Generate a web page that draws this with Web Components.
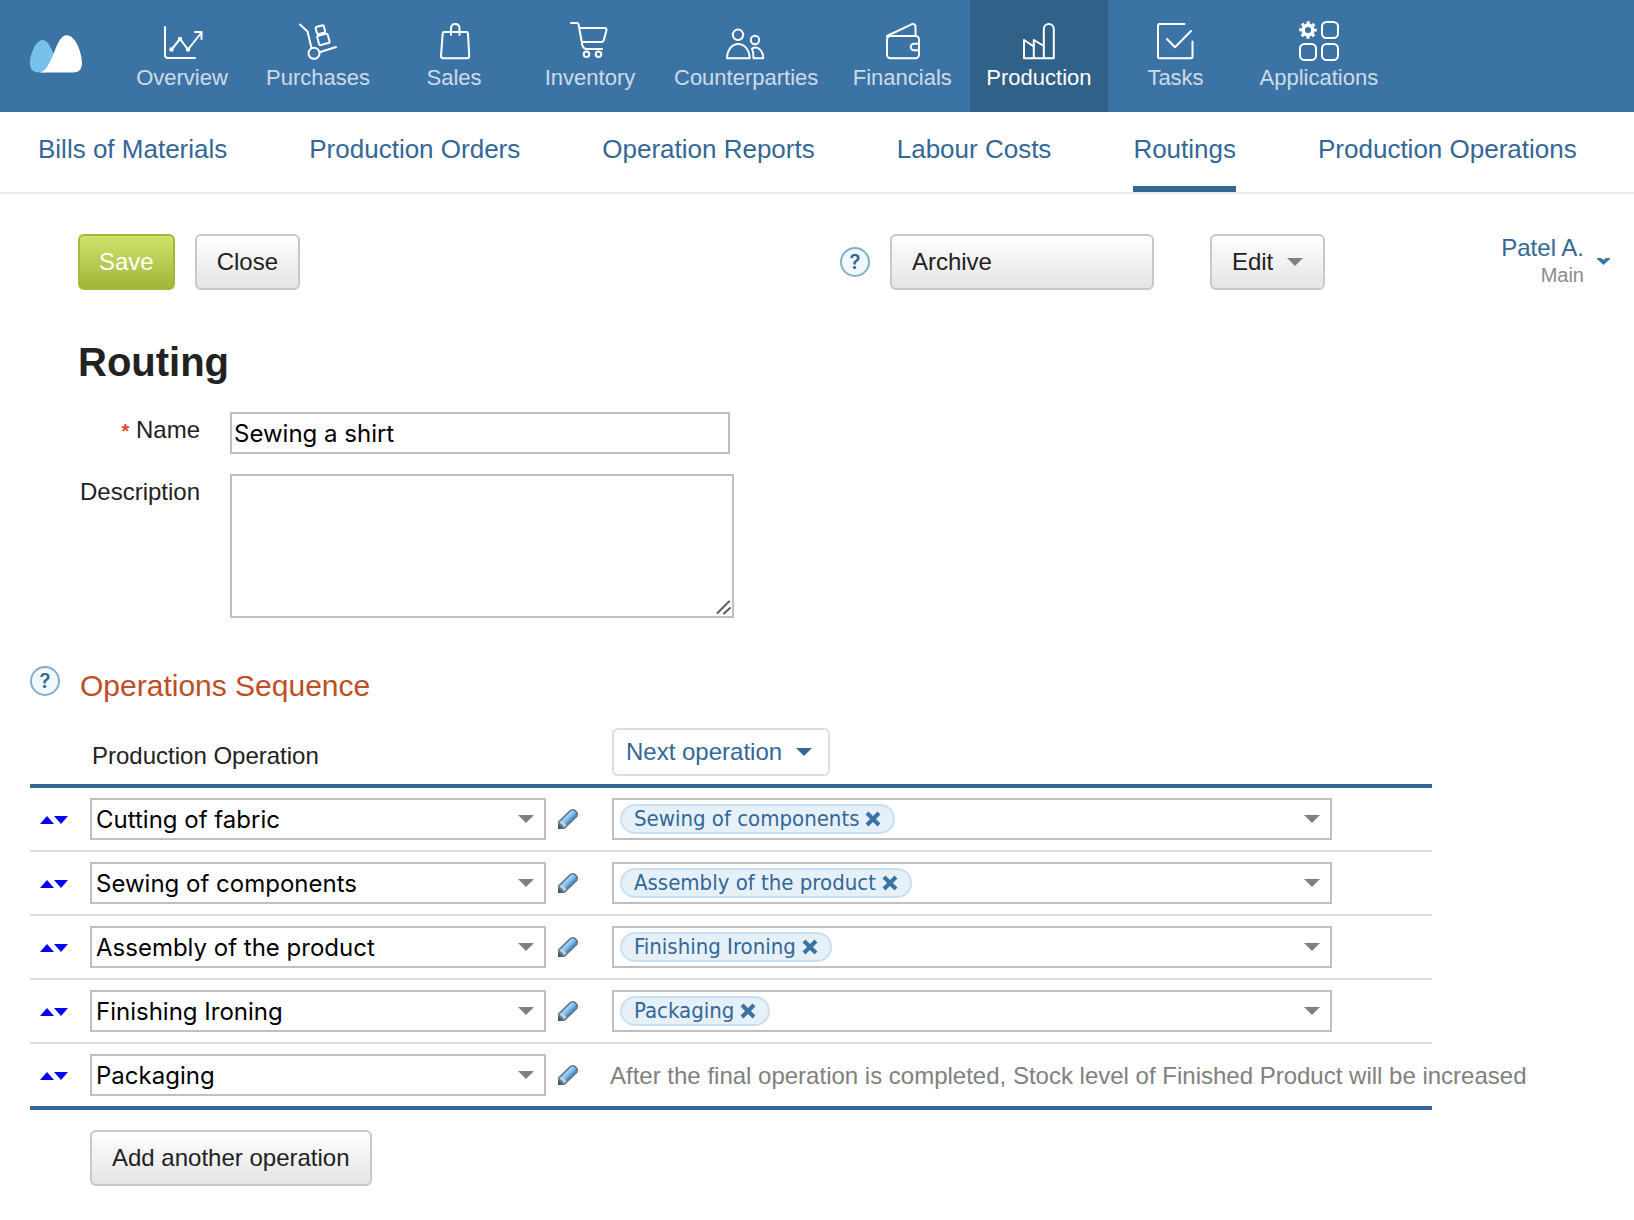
<!DOCTYPE html>
<html lang="en">
<head>
<meta charset="utf-8">
<title>Routing</title>
<style>
  body {
    margin: 0;
    background: #ffffff;
    color: #222222;
    font-family: "Liberation Sans", Arial, sans-serif;
    font-size: 24px;
    line-height: 32px;
    --nav: #3c73a5;
    --nav-active: #306189;
    --link: #326797;
    --muted: #808080;
    --field-border: #bfbfbf;
    --field-font: Inter, sans-serif;
    --tag-font: "DejaVu Sans Condensed", "DejaVu Sans", sans-serif;
  }
</style>
</head>
<body>
<routing-page></routing-page>

<script>
// Registers an element whose shadow root is cloned from the given markup.
function define(name, html, setup) {
  const template = document.createElement("template");
  template.innerHTML = html;

  customElements.define(name, class extends HTMLElement {
    constructor() {
      super();
      this.attachShadow({ mode: "open" });
      this.shadowRoot.appendChild(template.content.cloneNode(true));
    }

    connectedCallback() {
      if (setup && !this.ready) {
        this.ready = true;
        setup(this, this.shadowRoot);
      }
    }
  });
}

const navIcons = {
  overview: `
    <path d="M3 7V35Q3 38 6 38H33"/>
    <path d="M9.500 29.500L18 19L26 29.500L39.500 12.500"/>
    <path d="M33 12H39.500V19"/>
    <g fill="currentColor" stroke="none"><circle cx="9.500" cy="29.500" r="2.200"/><circle cx="18" cy="19" r="2.200"/><circle cx="26" cy="29.500" r="2.200"/></g>`,
  purchases: `
    <path d="M2 4.500L9.500 11.500L13.500 28"/>
    <circle cx="16" cy="33.300" r="5.500"/>
    <path d="M21.500 32.300L38 27"/>
    <rect x="18.200" y="6" width="8.400" height="7.500" rx="1.500" transform="rotate(-15 22.400 9.700)"/>
    <rect x="20" y="14.600" width="10.800" height="9.600" rx="1.500" transform="rotate(-15 25.400 19.400)"/>`,
  sales: `
    <path d="M10.500 12H32.500Q33.800 12 34 13.500L35.200 36Q35.200 38.200 33 38.200H9.200Q7 38.200 7 36L8.700 13.500Q8.900 12 10.500 12Z"/>
    <path d="M17 15V8.500Q17 4 21.300 4Q25.500 4 25.500 8.500V15"/>`,
  inventory: `
    <path d="M1 3H7Q8.300 3 8.600 4.500L12.300 25Q13.200 29 17 29H32"/>
    <path d="M9.500 8H34.500Q37 8 36.400 10.500L33.800 20Q33.200 22 31 22H12"/>
    <circle cx="16.500" cy="34.300" r="2.800"/><circle cx="28.500" cy="34.300" r="2.800"/>`,
  counterparties: `
    <circle cx="12" cy="14.800" r="5.200"/>
    <path d="M1 38.200C1.500 19.300 23 19.300 23.700 38.200Z"/>
    <circle cx="29" cy="20" r="4.200"/>
    <path d="M26 28.500C31 25.500 37 29.500 37.300 38.200H27.500C27.500 34 27 31 26 28.500Z"/>`,
  financials: `
    <rect x="5" y="16" width="32" height="22.200" rx="3.500"/>
    <path d="M5 16L29.500 4.300Q33.300 3.200 33.500 7V16"/>
    <path d="M37 23.700H32A3.200 3.200 0 0 0 32 30.200H37"/>`,
  production: `
    <path d="M5 38.200V20L14.800 26.500V20L24.800 26V9A5 5 0 0 1 34.800 9V38.200Z"/>
    <path d="M14.800 26V38M24.800 26V38"/>`,
  tasks: `
    <path d="M28.500 4H3.500Q2 4 2 5.500V36.700Q2 38.200 3.500 38.200H35Q36.500 38.200 36.500 36.700V21.500"/>
    <path d="M11 19L19 27.300L35 11"/>`,
  applications: `
    <rect x="23" y="2" width="16" height="16" rx="4.500"/>
    <rect x="1" y="24" width="16" height="16" rx="4.500"/>
    <rect x="23" y="24" width="16" height="16" rx="4.500"/>
    <circle cx="9" cy="10" r="4.900" stroke-width="3.600"/>
    <circle cx="9" cy="10" r="7.400" stroke-width="2.800" stroke-linecap="butt" stroke-dasharray="3 2.812" stroke-dashoffset="1.500"/>`
};

define("nav-item", `
  <style>
    :host { display: block; }
    a {
      display: flex;
      flex-direction: column;
      align-items: center;
      gap: 5px;
      box-sizing: border-box;
      min-width: 136px;
      height: 112px;
      padding: 20px 16px 0;
      color: #ffffff;
      text-decoration: none;
    }
    :host([active]) a { background: var(--nav-active); }
    svg { display: block; overflow: visible; }
    span { font-size: 22px; line-height: 26px; opacity: 0.74; }
    :host([active]) span { opacity: 1; }
  </style>
  <a href="#">
    <svg width="40" height="40" viewBox="0 0 40 40" fill="none" stroke="currentColor" stroke-width="2" stroke-linejoin="round" stroke-linecap="round" aria-hidden="true"></svg>
    <span><slot></slot></span>
  </a>
`, (host, root) => {
  root.querySelector("svg").innerHTML = navIcons[host.getAttribute("icon")];
});

define("top-nav", `
  <style>
    :host { display: block; background: var(--nav); }
    nav { display: flex; align-items: center; padding-left: 30px; }
    .logo { display: block; margin-right: 32px; padding-bottom: 4px; }
    svg { display: block; }
  </style>
  <nav>
    <a class="logo" href="#" aria-label="Home">
      <svg width="52" height="40" viewBox="30 34 52 40">
        <path fill="#78c1ec" d="M30 63C30 55 35.500 40 42.500 40C48.500 40 51 48.500 53.500 54L46 72.500H39C32.500 72.500 30 69 30 63Z"/>
        <path fill="#ffffff" d="M40 72.500C53 70 55 35.500 66.500 35.300C76 35.300 82 54 82 62.500C82 69.500 79 72.500 72.500 72.500Z"/>
      </svg>
    </a>
    <slot></slot>
  </nav>
`);

define("sub-nav", `
  <style>
    :host { display: block; border-bottom: 2px solid #ebebeb; }
    nav { display: flex; gap: 82px; padding-left: 38px; }
  </style>
  <nav><slot></slot></nav>
`);

define("sub-nav-link", `
  <style>
    :host { display: block; white-space: nowrap; }
    a {
      display: block;
      box-sizing: border-box;
      height: 80px;
      padding-top: 21px;
      border-bottom: 6px solid transparent;
      color: var(--link);
      font-size: 26px;
      text-decoration: none;
    }
    :host([active]) a { border-color: var(--link); }
  </style>
  <a href="#"><slot></slot></a>
`);

define("ui-button", `
  <style>
    :host { display: block; }
    button {
      display: flex;
      align-items: center;
      gap: 14px;
      width: 100%;
      height: 56px;
      padding: 0 20px;
      border: 2px solid #c8c8c8;
      border-radius: 6px;
      background: linear-gradient(#ffffff, #e4e4e4);
      color: #222222;
      font: inherit;
      white-space: nowrap;
    }
    :host([primary]) button {
      padding: 0 19px;
      border-color: #a4b83a;
      background: linear-gradient(#cfe26d, #a3b638);
      color: #ffffff;
    }
    :host([outline]) button {
      height: 48px;
      padding: 0 16px 0 12px;
      border-color: #dddddd;
      background: #ffffff;
      color: var(--link);
    }
    svg { display: none; fill: #808080; }
    :host([menu]) svg { display: block; }
    :host([outline]) svg { fill: var(--link); }
  </style>
  <button type="button">
    <slot></slot>
    <svg width="16" height="8" viewBox="0 0 16 8" aria-hidden="true"><path d="M0 0H16L8 8Z"/></svg>
  </button>
`);

define("help-tip", `
  <style>
    :host { display: block; flex: none; }
    button {
      display: block;
      width: 30px;
      height: 30px;
      padding: 0;
      border: 2px solid #85aecd;
      border-radius: 50%;
      background: #f0f7fd;
      color: var(--link);
      font: 600 20px/26px var(--field-font);
      text-align: center;
    }
  </style>
  <button type="button">?</button>
`);

define("user-menu", `
  <style>
    :host { display: block; }
    button {
      display: flex;
      align-items: center;
      gap: 13px;
      padding: 0 0 2px;
      border: 0;
      background: none;
      font: inherit;
      color: var(--link);
      text-align: right;
    }
    .name, .role { display: block; white-space: nowrap; }
    .name { line-height: 28px; }
    .role { color: #8c8c8c; font-size: 20px; line-height: 26px; }
  </style>
  <button type="button">
    <span>
      <span class="name"><slot></slot></span>
      <span class="role"><slot name="role"></slot></span>
    </span>
    <svg width="13" height="7" viewBox="0 0 13 7" fill="#3c73a5" aria-hidden="true"><path d="M0 0H4L6.500 2L9 0H13V1L6.500 7L0 1Z"/></svg>
  </button>
`);

define("tool-bar", `
  <style>
    :host {
      display: flex;
      align-items: center;
      gap: 20px;
      height: 56px;
      padding: 40px 24px 0 78px;
    }
    help-tip { margin-left: auto; }
    .archive { width: 264px; }
    .edit { margin-left: 36px; }
    user-menu { margin-left: 156px; }
  </style>
  <ui-button primary>Save</ui-button>
  <ui-button>Close</ui-button>
  <help-tip></help-tip>
  <ui-button class="archive">Archive</ui-button>
  <ui-button class="edit" menu>Edit</ui-button>
  <user-menu>Patel A.<span slot="role">Main</span></user-menu>
`);

define("routing-form", `
  <style>
    :host { display: block; padding: 48px 78px 0; }
    h1 { margin: 0 0 26px; font-size: 40px; line-height: 48px; }
    form {
      display: grid;
      grid-template-columns: 122px minmax(0, 504px);
      gap: 20px 30px;
    }
    label { padding-top: 2px; text-align: right; white-space: nowrap; }
    .required { color: #e8402c; font-size: 20px; font-weight: bold; }
    input, textarea {
      display: block;
      box-sizing: border-box;
      margin: 0;
      border: 2px solid var(--field-border);
      border-radius: 0;
      background: #ffffff;
      color: #000000;
      font: 24px/32px var(--field-font);
      outline: 0;
    }
    input { width: calc(100% - 4px); height: 42px; padding: 1px 2px 0; }
    textarea { width: 100%; height: 144px; padding: 4px; resize: none; }
    .area { position: relative; }
    .area svg { position: absolute; right: 3px; bottom: 3px; }
  </style>
  <h1>Routing</h1>
  <form>
    <label for="name"><span class="required">*</span> Name</label>
    <input id="name" type="text" value="Sewing a shirt">
    <label for="description">Description</label>
    <div class="area">
      <textarea id="description"></textarea>
      <svg width="15" height="15" viewBox="0 0 15 15" stroke="#5c5c5c" stroke-width="2" stroke-linecap="round" aria-hidden="true"><path d="M1.500 13L13 1.500M8 13.500L14 8"/></svg>
    </div>
  </form>
`);

define("operation-select", `
  <style>
    :host { display: grid; align-items: center; }
    select, svg { grid-area: 1 / 1; }
    select {
      appearance: none;
      box-sizing: border-box;
      width: 100%;
      height: 42px;
      padding: 1px 32px 0 4px;
      border: 2px solid var(--field-border);
      border-radius: 0;
      background: #ffffff;
      color: #000000;
      font: 24px/32px var(--field-font);
    }
    svg { justify-self: end; margin-right: 12px; fill: #808080; pointer-events: none; }
  </style>
  <select aria-label="Production Operation"><option></option></select>
  <svg width="16" height="8" viewBox="0 0 16 8" aria-hidden="true"><path d="M0 0H16L8 8Z"/></svg>
`, (host, root) => {
  root.querySelector("option").textContent = host.getAttribute("value");
});

define("tag-select", `
  <style>
    :host {
      display: flex;
      align-items: center;
      box-sizing: border-box;
      max-width: 720px;
      height: 42px;
      padding: 0 10px 0 6px;
      border: 2px solid var(--field-border);
    }
    .tag {
      display: flex;
      align-items: center;
      gap: 6px;
      box-sizing: border-box;
      height: 30px;
      padding: 0 12px;
      border: 2px solid #c8dff1;
      border-radius: 15px;
      background: #e6f0f9;
      color: var(--link);
      font: 22px/26px var(--tag-font);
      white-space: nowrap;
    }
    button { display: block; padding: 0; border: 0; background: none; }
    .open { margin-left: auto; }
    svg { display: block; }
  </style>
  <span class="tag">
    <slot></slot>
    <button type="button" aria-label="Remove">
      <svg width="16" height="16" viewBox="0 0 16 16" stroke="#3c73a5" stroke-width="4.200"><path d="M2 2L14 14M14 2L2 14"/></svg>
    </button>
  </span>
  <button class="open" type="button" aria-label="Choose next operation">
    <svg width="16" height="8" viewBox="0 0 16 8" fill="#808080"><path d="M0 0H16L8 8Z"/></svg>
  </button>
`);

define("row-mover", `
  <style>
    :host { display: flex; padding: 2px 0 0 10px; }
    button { display: block; padding: 0; border: 0; background: none; }
    svg { display: block; fill: #0000ff; }
  </style>
  <button type="button" aria-label="Move up"><svg width="14" height="8" viewBox="0 0 14 8"><path d="M7 0L14 8H0Z"/></svg></button>
  <button type="button" aria-label="Move down"><svg width="14" height="8" viewBox="0 0 14 8"><path d="M0 0H14L7 8Z"/></svg></button>
`);

define("edit-pencil", `
  <style>
    :host { display: block; }
    button { display: block; padding: 0; border: 0; background: none; }
    svg { display: block; }
  </style>
  <button type="button" aria-label="Edit operation">
    <svg width="20" height="20" viewBox="0 0 20 20">
      <defs>
        <linearGradient id="body" gradientUnits="userSpaceOnUse" x1="6" y1="6" x2="13" y2="13">
          <stop offset="0" stop-color="#6d9cc2"/>
          <stop offset="0.350" stop-color="#a3d0f4"/>
          <stop offset="0.700" stop-color="#66aade"/>
          <stop offset="1" stop-color="#427099"/>
        </linearGradient>
      </defs>
      <path d="M0 20V12.500L11.500 1.200Q13 0 15 0H16.500L20 3.500V6Q20 7.500 18.500 8.800L7.500 19.300Q6.800 20 5.500 20Z" fill="#627e92"/>
      <path d="M4 11L13 2Q14.500 1.200 16 2L18 4Q18.800 5.500 17.800 7L8.500 16Z" fill="url(#body)"/>
      <path d="M1.500 13.500L4 11L8.500 16L6.500 18Z" fill="#c3d3de"/>
      <path d="M0 14.500L5 20H0Z" fill="#4a5b66"/>
    </svg>
  </button>
`);

const operations = [
  ["Cutting of fabric", "Sewing of components"],
  ["Sewing of components", "Assembly of the product"],
  ["Assembly of the product", "Finishing Ironing"],
  ["Finishing Ironing", "Packaging"],
  ["Packaging", null]
];

define("operations-table", `
  <style>
    :host { display: block; }
    table {
      width: 100%;
      max-width: 1402px;
      border-spacing: 0;
      table-layout: fixed;
    }
    .move { width: 60px; }
    .current { width: 522px; }
    th {
      padding: 0 0 12px 2px;
      border-bottom: 4px solid var(--link);
      font-weight: normal;
      text-align: left;
      vertical-align: bottom;
    }
    th:last-child { padding: 0 0 8px; }
    th ui-button { width: max-content; }
    td { padding: 10px 0; border-bottom: 2px solid #dddddd; white-space: nowrap; }
    tbody tr:last-child td { border-bottom: 4px solid var(--link); }
    .operation { display: flex; align-items: center; gap: 12px; padding-right: 34px; }
    operation-select { flex: 1; }
    .note { margin: 0 -2px; padding-top: 2px; color: var(--muted); }
  </style>
  <table>
    <colgroup><col class="move"><col class="current"><col></colgroup>
    <thead>
      <tr>
        <th></th>
        <th>Production Operation</th>
        <th><ui-button outline menu>Next operation</ui-button></th>
      </tr>
    </thead>
    <tbody></tbody>
  </table>
`, (host, root) => {
  root.querySelector("tbody").innerHTML = operations.map(([name, next]) => `
    <tr>
      <td><row-mover></row-mover></td>
      <td><div class="operation"><operation-select value="${name}"></operation-select><edit-pencil></edit-pencil></div></td>
      <td>${next
        ? `<tag-select>${next}</tag-select>`
        : `<div class="note">After the final operation is completed, Stock level of Finished Product will be increased</div>`}</td>
    </tr>`).join("");
});

define("operations-section", `
  <style>
    :host { display: block; padding: 48px 30px 34px; }
    header { display: flex; gap: 20px; margin-bottom: 24px; }
    h2 {
      margin: 0;
      padding-top: 2px;
      color: #c04d24;
      font-size: 30px;
      font-weight: normal;
      line-height: 36px;
    }
    .add { width: max-content; margin: 20px 0 0 60px; }
  </style>
  <header>
    <help-tip></help-tip>
    <h2>Operations Sequence</h2>
  </header>
  <operations-table></operations-table>
  <ui-button class="add">Add another operation</ui-button>
`);

define("routing-page", `
  <style>
    :host { display: block; }
  </style>
  <top-nav>
    <nav-item icon="overview">Overview</nav-item>
    <nav-item icon="purchases">Purchases</nav-item>
    <nav-item icon="sales">Sales</nav-item>
    <nav-item icon="inventory">Inventory</nav-item>
    <nav-item icon="counterparties">Counterparties</nav-item>
    <nav-item icon="financials">Financials</nav-item>
    <nav-item icon="production" active>Production</nav-item>
    <nav-item icon="tasks">Tasks</nav-item>
    <nav-item icon="applications">Applications</nav-item>
  </top-nav>
  <sub-nav>
    <sub-nav-link>Bills of Materials</sub-nav-link>
    <sub-nav-link>Production Orders</sub-nav-link>
    <sub-nav-link>Operation Reports</sub-nav-link>
    <sub-nav-link>Labour Costs</sub-nav-link>
    <sub-nav-link active>Routings</sub-nav-link>
    <sub-nav-link>Production Operations</sub-nav-link>
  </sub-nav>
  <main>
    <tool-bar></tool-bar>
    <routing-form></routing-form>
    <operations-section></operations-section>
  </main>
`);
</script>
</body>
</html>
